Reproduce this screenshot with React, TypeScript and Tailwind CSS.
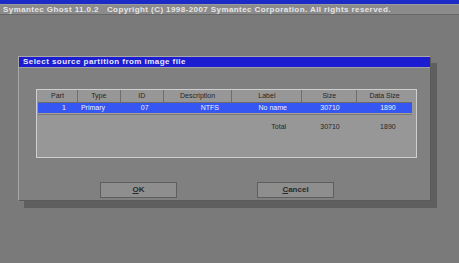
import React from 'react';

const cols = [
  { label: 'Part', w: 'w-[40px]' },
  { label: 'Type', w: 'w-[43px]' },
  { label: 'ID', w: 'w-[43px]' },
  { label: 'Description', w: 'w-[69px]' },
  { label: 'Label', w: 'w-[70px]' },
  { label: 'Size', w: 'w-[55px]' },
  { label: 'Data Size', w: 'w-[55px]' },
];

const DosButton = ({ children }: { children: React.ReactNode }) => (
  <div className="w-[77px] h-[16px] bg-[#8e8e8e] border border-[#5e5e5e] flex items-center justify-center text-[#2a2a2a] text-[8px] font-bold">
    {children}
  </div>
);

export default function App() {
  return (
    <div
      className="w-[459px] h-[263px] bg-[#7a7a7a] flex flex-col overflow-hidden"
      style={{ fontFamily: '"Liberation Sans", Arial, sans-serif' }}
    >
      {/* ghost header */}
      <div className="h-[4px] bg-[#1b2bc8]" />
      <div className="h-[11px] bg-[#8b8b8b] border-t border-[#9a9a9a] border-b border-b-[#686868] flex items-center pl-[3px] text-[8px] font-bold text-[#e6e6e6] whitespace-pre tracking-[0.42px]">
        Symantec Ghost 11.0.2   Copyright (C) 1998-2007 Symantec Corporation. All rights reserved.
      </div>

      {/* dialog */}
      <div className="ml-[18px] mt-[41px] w-[413px] h-[145px] bg-[#808080] border-l border-t border-[#a8a8a8] border-r border-b border-r-[#5a5a5a] border-b-[#5a5a5a] shadow-[6px_7px_0_#5f5f5f] flex flex-col">
        <div className="h-[10px] bg-[#1c1cd0] flex items-center pl-[4px] text-[8px] font-bold text-[#e8e8ff] tracking-[0.45px]">
          Select source partition from image file
        </div>
        <div className="flex-1 border-t border-[#a0a0a0] px-[17px] pt-[21px] flex flex-col">
          {/* partition table */}
          <div className="w-[381px] h-[69px] bg-[#979797] border border-[#cfcfcf] pl-[1px] pr-[4px]">
            <div className="flex h-[13px] border-b border-[#6a6a6a]">
              {cols.map((c, i) => (
                <div
                  key={c.label}
                  className={`${c.w} flex items-center justify-center text-[7px] text-[#262626] ${i < cols.length - 1 ? 'border-r border-[#6e6e6e]' : ''}`}
                >
                  {c.label}
                </div>
              ))}
            </div>
            <div className="flex h-[10px] bg-[#3556f2] text-[7px] text-[#eef0ff] items-center">
              <div className="w-[40px] pl-[24px]">1</div>
              <div className="w-[43px] pl-[3px]">Primary</div>
              <div className="w-[43px] pl-[20px]">07</div>
              <div className="w-[69px] pl-[37px]">NTFS</div>
              <div className="w-[70px] pl-[26px]">No name</div>
              <div className="w-[55px] pl-[18px]">30710</div>
              <div className="w-[55px] pl-[23px]">1890</div>
            </div>
            <div className="h-[2px] border-t border-[#a8a08c] border-b border-b-[#7a7a7a]" />
            <div className="flex h-[24px] items-center text-[7px] text-[#262626]">
              <div className="w-[195px]" />
              <div className="w-[70px] pl-[39px]">Total</div>
              <div className="w-[55px] pl-[18px]">30710</div>
              <div className="w-[55px] pl-[23px]">1890</div>
            </div>
          </div>

          {/* buttons */}
          <div className="flex mt-[24px] pl-[64px] gap-[80px]">
            <DosButton>
              <span className="underline">O</span>K
            </DosButton>
            <DosButton>
              <span className="underline">C</span>ancel
            </DosButton>
          </div>
        </div>
      </div>
    </div>
  );
}
